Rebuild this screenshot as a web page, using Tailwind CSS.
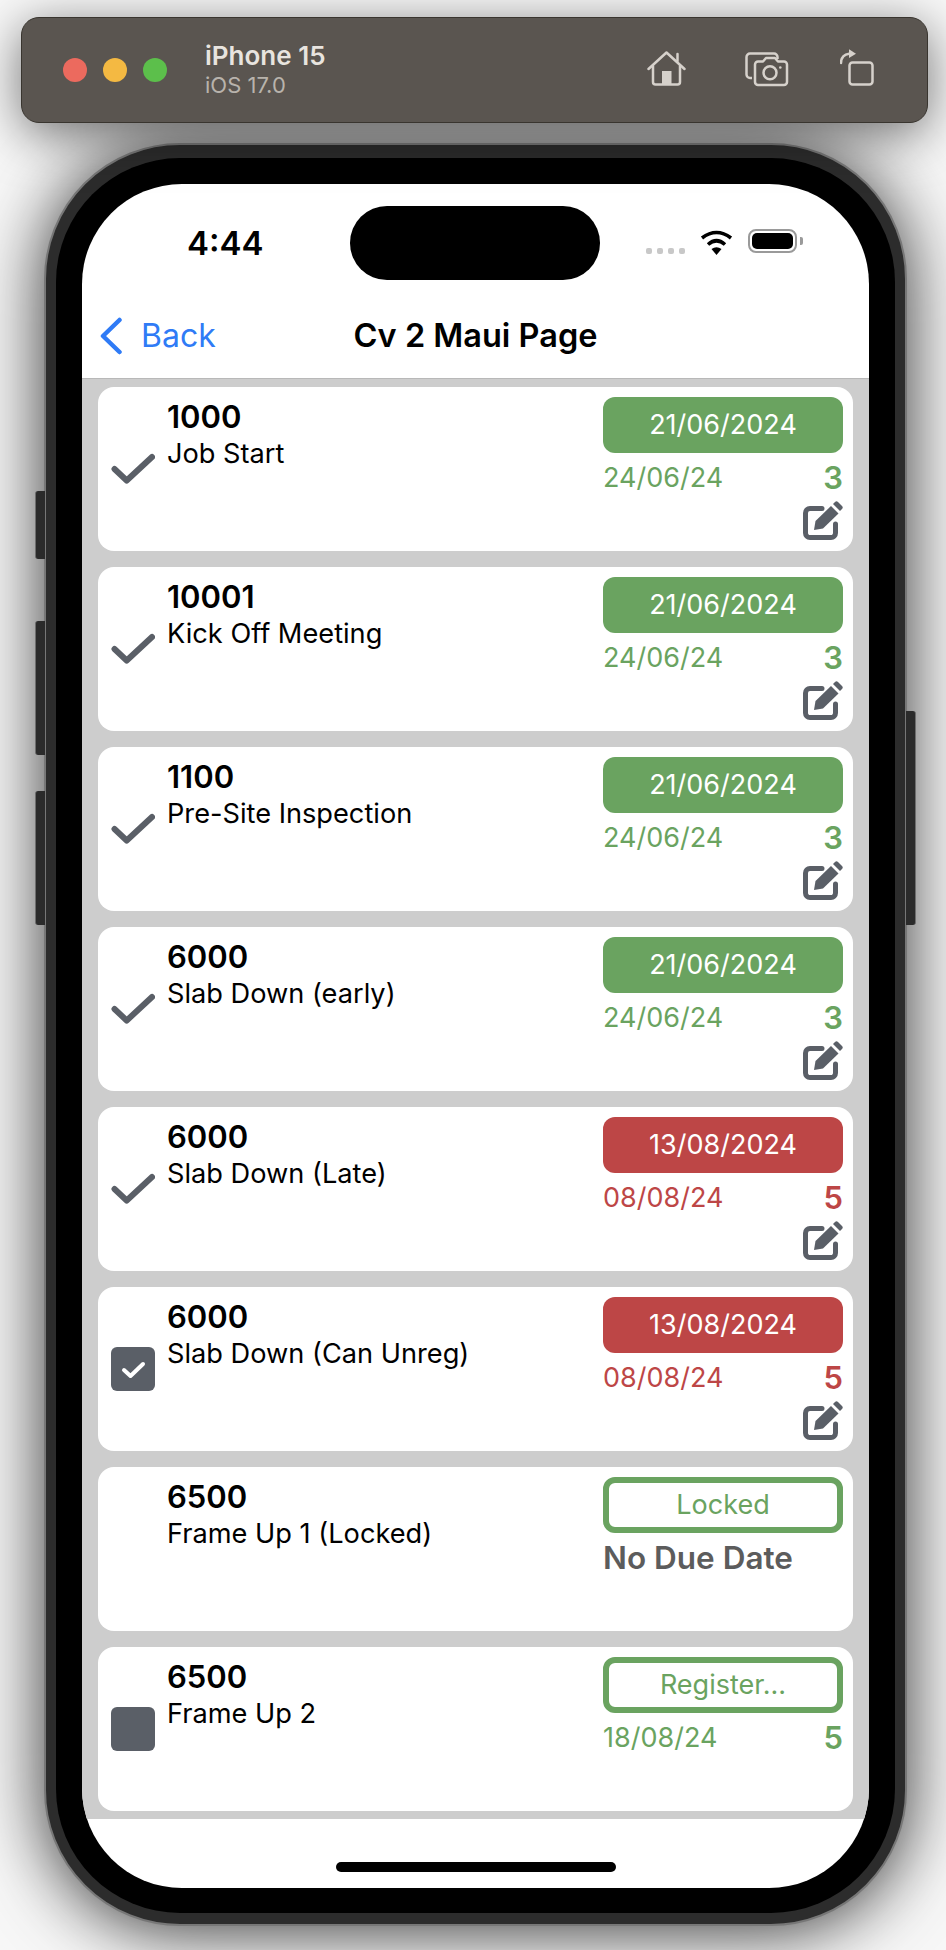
<!DOCTYPE html>
<html lang="en">
  <head>
    <meta charset="UTF-8" />
    <meta name="viewport" content="width=device-width, initial-scale=1.0" />
    <title>Cv 2 Maui Page</title>
    <script src="https://cdn.jsdelivr.net/npm/@tailwindcss/browser@4"></script>
  </head>
  <body class="bg-[#f7f7f7] font-['Inter',sans-serif] overflow-hidden">
    <svg class="hidden">
      <symbol id="edit" viewBox="0 0 40 40">
        <path d="M19 7.5H7A4.5 4.5 0 0 0 2.5 12V32A4.5 4.5 0 0 0 7 36.5H28A4.5 4.5 0 0 0 32.500 32V23" fill="none" stroke="#5a5f67" stroke-width="5" stroke-linecap="round" />
        <path d="M11 29 12.500 20 28 5 35.500 12.500 20 27.500Z" fill="#5a5f67" />
        <path d="M30 3l2-2q1.500-1.500 3 0l4 4q1.500 1.500 0 3l-2 2z" fill="#5a5f67" />
      </symbol>
      <symbol id="tick" viewBox="0 0 44 32">
        <path d="M3.500 16 15.700 27.500 41 4" fill="none" stroke="#5a5f67" stroke-width="6" stroke-linecap="round" stroke-linejoin="round" />
      </symbol>
    </svg>

    <div class="relative w-[946px] h-[1950px] pt-[17px]">
      <!-- simulator toolbar -->
      <div class="relative z-10 ml-[21px] w-[907px] h-[106px] rounded-[18px] bg-[#5a5550] border border-[#39352f] shadow-[0_10px_50px_rgba(0,0,0,0.55)] flex items-center">
        <div class="ml-[41px] flex gap-[16px]">
          <span class="w-[24px] h-[24px] rounded-full bg-[#ec6a5e]"></span>
          <span class="w-[24px] h-[24px] rounded-full bg-[#f4b942]"></span>
          <span class="w-[24px] h-[24px] rounded-full bg-[#5cbf4b]"></span>
        </div>
        <div class="ml-[38px] w-[125px] shrink-0">
          <div class="text-[26px] leading-[30px] font-semibold text-[#e8e4df] whitespace-nowrap">iPhone 15</div>
          <div class="text-[22px] leading-[28px] text-[#b8b3ac] whitespace-nowrap">iOS 17.0</div>
        </div>
        <svg class="ml-[317px] mt-[-3px]" width="39" height="35" viewBox="0 0 39 35" fill="none" stroke="#d6d1cb" stroke-width="2.500" stroke-linecap="round" stroke-linejoin="round">
          <path d="M1.500 18 19.500 1.500 37.500 18" />
          <path d="M30.500 3V10" />
          <path d="M6 15V31A2.500 2.500 0 0 0 8.500 33.500H30.500A2.500 2.500 0 0 0 33 31V15" />
          <rect x="15" y="20" width="9.500" height="13" fill="#d6d1cb" stroke="none" />
        </svg>
        <svg class="ml-[59px] mt-[-1px]" width="44" height="35" viewBox="0 0 44 35" fill="none" stroke="#d6d1cb" stroke-width="2.500" stroke-linejoin="round">
          <path d="M7 26H5A3.500 3.500 0 0 1 1.500 22.500V5A3.500 3.500 0 0 1 5 1.500H29A3.500 3.500 0 0 1 32.500 5V7" />
          <path d="M13 9.500H18L21 6H30L33 9.500H39A3 3 0 0 1 42 12.500V30A3 3 0 0 1 39 33H13A3 3 0 0 1 10 30V12.500A3 3 0 0 1 13 9.500Z" fill="#5a5550" />
          <circle cx="25" cy="20.700" r="6.500" />
          <circle cx="35.300" cy="15.500" r="1.300" fill="#d6d1cb" stroke="none" />
        </svg>
        <svg class="ml-[51px] mt-[-5px]" width="34" height="37" viewBox="0 0 34 37" fill="none" stroke="#d6d1cb" stroke-width="2.500" stroke-linecap="round">
          <rect x="9.500" y="13.500" width="23" height="22" rx="3" />
          <path d="M1 14C1 8.500 4.500 5 9 4.700" />
          <path d="M9 0.300 16 4.700 9 9Z" fill="#d6d1cb" stroke="none" />
        </svg>
      </div>

      <!-- side buttons -->
      <div class="absolute z-10 left-[35px] top-[491px] w-[10px] h-[68px] rounded-l-[3px] bg-[#2b2b2b] border-l border-[#6e6e6e]"></div>
      <div class="absolute z-10 left-[35px] top-[621px] w-[10px] h-[134px] rounded-l-[3px] bg-[#2b2b2b] border-l border-[#6e6e6e]"></div>
      <div class="absolute z-10 left-[35px] top-[791px] w-[10px] h-[134px] rounded-l-[3px] bg-[#2b2b2b] border-l border-[#6e6e6e]"></div>
      <div class="absolute z-10 left-[906px] top-[711px] w-[10px] h-[214px] rounded-r-[3px] bg-[#2b2b2b] border-r border-[#6e6e6e]"></div>

      <!-- phone -->
      <div class="relative mt-[20px] ml-[44px] w-[863px] h-[1783px] rounded-[136px] border-2 border-[#777777] bg-[#2c2c2c] px-[10px] pt-[13px] pb-[11px] shadow-[0_4px_70px_rgba(0,0,0,0.8)]">
        <div class="h-full rounded-[124px] bg-black px-[26px] pt-[26px] pb-[25px]">
          <div class="h-full rounded-[100px] overflow-hidden bg-white flex flex-col">
            <!-- status bar -->
            <div class="h-[106px] shrink-0 flex items-start">
              <div class="ml-[105px] mt-[39px] w-[76px] text-[33px] leading-[40px] font-semibold text-black">4:44</div>
              <div class="ml-[87px] mt-[22px] w-[250px] h-[74px] rounded-full bg-black"></div>
              <div class="ml-[46px] mt-[64px] flex gap-[5px]">
                <span class="w-[6px] h-[6px] rounded-[2px] bg-[#c8c8c8]"></span>
                <span class="w-[6px] h-[6px] rounded-[2px] bg-[#c8c8c8]"></span>
                <span class="w-[6px] h-[6px] rounded-[2px] bg-[#c8c8c8]"></span>
                <span class="w-[6px] h-[6px] rounded-[2px] bg-[#c8c8c8]"></span>
              </div>
              <svg class="ml-[15px] mt-[46px]" width="33" height="25" viewBox="0 0 33 25" fill="none" stroke="black" stroke-width="3.600">
                <path d="M2 8Q16.500 -3 31 8" />
                <path d="M8 14.500Q16.500 7 25 14.500" />
                <path d="M11.500 19Q16.500 15.500 21.500 19L16.500 25Z" fill="black" stroke="none" />
              </svg>
              <div class="ml-[15px] mt-[45px] flex items-center">
                <div class="w-[49px] h-[24px] rounded-[8px] border-2 border-[#9a9a9a] p-[2px]">
                  <div class="h-full rounded-[5px] bg-black"></div>
                </div>
                <div class="ml-[3px] w-[3px] h-[8px] rounded-r-[2px] bg-[#9a9a9a]"></div>
              </div>
            </div>

            <!-- nav bar -->
            <div class="h-[89px] shrink-0 grid grid-cols-[1fr_auto_1fr] items-center border-b border-[#b8b8b8] pt-[4px]">
              <div class="flex items-center text-[#2f7bf6]">
                <svg class="ml-[17px]" width="24" height="38" viewBox="0 0 24 38" fill="none" stroke="#2f7bf6" stroke-width="4.500" stroke-linecap="round" stroke-linejoin="round">
                  <path d="M20.500 3 4 19 20.500 35" />
                </svg>
                <span class="ml-[18px] text-[32px] leading-[40px]">Back</span>
              </div>
              <div class="text-[32.500px] leading-[40px] font-semibold text-black">Cv 2 Maui Page</div>
              <div></div>
            </div>

            <!-- rows -->
            <div class="bg-[#cdcdcd] px-[16px] pt-[8px] pb-[8px] flex flex-col gap-[16px]">
              <div class="h-[164px] rounded-[16px] bg-white flex">
                <div class="w-[44px] ml-[13px] mr-[12px] pt-[66px] shrink-0"><svg width="44" height="32"><use href="#tick" /></svg></div>
                <div class="flex-1 pt-[12px]">
                  <div class="text-[31px] leading-[36px] font-semibold text-black">1000</div>
                  <div class="text-[27.200px] leading-[37px] text-black">Job Start</div>
                </div>
                <div class="w-[240px] mr-[10px] pt-[10px] shrink-0">
                  <div class="h-[56px] rounded-[12px] bg-[#6aa360] text-white text-[27px] flex items-center justify-center">21/06/2024</div>
                  <div class="mt-[5px] h-[40px] flex items-center justify-between text-[#6aa360]"><span class="text-[27px]">24/06/24</span><span class="text-[31px] font-semibold">3</span></div>
                  <svg class="ml-auto mt-[3px]" width="40" height="40"><use href="#edit" /></svg>
                </div>
              </div>
              <div class="h-[164px] rounded-[16px] bg-white flex">
                <div class="w-[44px] ml-[13px] mr-[12px] pt-[66px] shrink-0"><svg width="44" height="32"><use href="#tick" /></svg></div>
                <div class="flex-1 pt-[12px]">
                  <div class="text-[31px] leading-[36px] font-semibold text-black">10001</div>
                  <div class="text-[27.200px] leading-[37px] text-black">Kick Off Meeting</div>
                </div>
                <div class="w-[240px] mr-[10px] pt-[10px] shrink-0">
                  <div class="h-[56px] rounded-[12px] bg-[#6aa360] text-white text-[27px] flex items-center justify-center">21/06/2024</div>
                  <div class="mt-[5px] h-[40px] flex items-center justify-between text-[#6aa360]"><span class="text-[27px]">24/06/24</span><span class="text-[31px] font-semibold">3</span></div>
                  <svg class="ml-auto mt-[3px]" width="40" height="40"><use href="#edit" /></svg>
                </div>
              </div>
              <div class="h-[164px] rounded-[16px] bg-white flex">
                <div class="w-[44px] ml-[13px] mr-[12px] pt-[66px] shrink-0"><svg width="44" height="32"><use href="#tick" /></svg></div>
                <div class="flex-1 pt-[12px]">
                  <div class="text-[31px] leading-[36px] font-semibold text-black">1100</div>
                  <div class="text-[27.200px] leading-[37px] text-black">Pre-Site Inspection</div>
                </div>
                <div class="w-[240px] mr-[10px] pt-[10px] shrink-0">
                  <div class="h-[56px] rounded-[12px] bg-[#6aa360] text-white text-[27px] flex items-center justify-center">21/06/2024</div>
                  <div class="mt-[5px] h-[40px] flex items-center justify-between text-[#6aa360]"><span class="text-[27px]">24/06/24</span><span class="text-[31px] font-semibold">3</span></div>
                  <svg class="ml-auto mt-[3px]" width="40" height="40"><use href="#edit" /></svg>
                </div>
              </div>
              <div class="h-[164px] rounded-[16px] bg-white flex">
                <div class="w-[44px] ml-[13px] mr-[12px] pt-[66px] shrink-0"><svg width="44" height="32"><use href="#tick" /></svg></div>
                <div class="flex-1 pt-[12px]">
                  <div class="text-[31px] leading-[36px] font-semibold text-black">6000</div>
                  <div class="text-[27.200px] leading-[37px] text-black">Slab Down (early)</div>
                </div>
                <div class="w-[240px] mr-[10px] pt-[10px] shrink-0">
                  <div class="h-[56px] rounded-[12px] bg-[#6aa360] text-white text-[27px] flex items-center justify-center">21/06/2024</div>
                  <div class="mt-[5px] h-[40px] flex items-center justify-between text-[#6aa360]"><span class="text-[27px]">24/06/24</span><span class="text-[31px] font-semibold">3</span></div>
                  <svg class="ml-auto mt-[3px]" width="40" height="40"><use href="#edit" /></svg>
                </div>
              </div>
              <div class="h-[164px] rounded-[16px] bg-white flex">
                <div class="w-[44px] ml-[13px] mr-[12px] pt-[66px] shrink-0"><svg width="44" height="32"><use href="#tick" /></svg></div>
                <div class="flex-1 pt-[12px]">
                  <div class="text-[31px] leading-[36px] font-semibold text-black">6000</div>
                  <div class="text-[27.200px] leading-[37px] text-black">Slab Down (Late)</div>
                </div>
                <div class="w-[240px] mr-[10px] pt-[10px] shrink-0">
                  <div class="h-[56px] rounded-[12px] bg-[#bd4646] text-white text-[27px] flex items-center justify-center">13/08/2024</div>
                  <div class="mt-[5px] h-[40px] flex items-center justify-between text-[#bd4646]"><span class="text-[27px]">08/08/24</span><span class="text-[31px] font-semibold">5</span></div>
                  <svg class="ml-auto mt-[3px]" width="40" height="40"><use href="#edit" /></svg>
                </div>
              </div>
              <div class="h-[164px] rounded-[16px] bg-white flex">
                <div class="w-[44px] ml-[13px] mr-[12px] pt-[60px] shrink-0">
                  <div class="w-[44px] h-[44px] rounded-[6px] bg-[#5a5f67]">
                    <svg width="44" height="44" viewBox="0 0 44 44" fill="none" stroke="white" stroke-width="4" stroke-linecap="round" stroke-linejoin="round"><path d="M13 23 19.500 29 32 17" /></svg>
                  </div>
                </div>
                <div class="flex-1 pt-[12px]">
                  <div class="text-[31px] leading-[36px] font-semibold text-black">6000</div>
                  <div class="text-[27.200px] leading-[37px] text-black">Slab Down (Can Unreg)</div>
                </div>
                <div class="w-[240px] mr-[10px] pt-[10px] shrink-0">
                  <div class="h-[56px] rounded-[12px] bg-[#bd4646] text-white text-[27px] flex items-center justify-center">13/08/2024</div>
                  <div class="mt-[5px] h-[40px] flex items-center justify-between text-[#bd4646]"><span class="text-[27px]">08/08/24</span><span class="text-[31px] font-semibold">5</span></div>
                  <svg class="ml-auto mt-[3px]" width="40" height="40"><use href="#edit" /></svg>
                </div>
              </div>
              <div class="h-[164px] rounded-[16px] bg-white flex">
                <div class="w-[44px] ml-[13px] mr-[12px] shrink-0"></div>
                <div class="flex-1 pt-[12px]">
                  <div class="text-[31px] leading-[36px] font-semibold text-black">6500</div>
                  <div class="text-[27.200px] leading-[37px] text-black">Frame Up 1 (Locked)</div>
                </div>
                <div class="w-[240px] mr-[10px] pt-[10px] shrink-0">
                  <div class="h-[56px] rounded-[12px] border-[6px] border-[#6aa360] text-[#6aa360] text-[27px] flex items-center justify-center">Locked</div>
                  <div class="mt-[5px] h-[40px] flex items-center text-[#5c5c5c] text-[31.500px] font-semibold whitespace-nowrap">No Due Date</div>
                </div>
              </div>
              <div class="h-[164px] rounded-[16px] bg-white flex">
                <div class="w-[44px] ml-[13px] mr-[12px] pt-[60px] shrink-0">
                  <div class="w-[44px] h-[44px] rounded-[6px] bg-[#5a5f67]"></div>
                </div>
                <div class="flex-1 pt-[12px]">
                  <div class="text-[31px] leading-[36px] font-semibold text-black">6500</div>
                  <div class="text-[27.200px] leading-[37px] text-black">Frame Up 2</div>
                </div>
                <div class="w-[240px] mr-[10px] pt-[10px] shrink-0">
                  <div class="h-[56px] rounded-[12px] border-[6px] border-[#6aa360] text-[#6aa360] text-[27px] flex items-center justify-center">Register...</div>
                  <div class="mt-[5px] h-[40px] flex items-center justify-between text-[#6aa360]"><span class="text-[27px]">18/08/24</span><span class="text-[31px] font-semibold">5</span></div>
                </div>
              </div>
            </div>

            <!-- home indicator -->
            <div class="flex-1 flex justify-center pt-[43px]">
              <div class="w-[280px] h-[10px] rounded-full bg-black"></div>
            </div>
          </div>
        </div>
      </div>
    </div>
  </body>
</html>
